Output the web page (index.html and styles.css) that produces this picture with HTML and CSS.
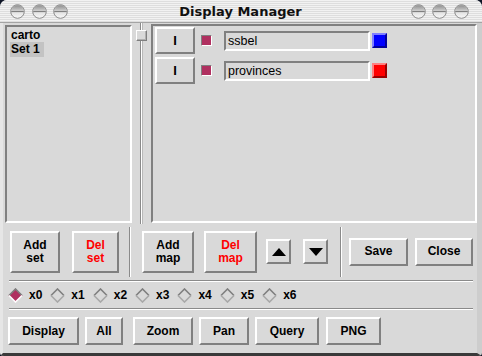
FILE: index.html
```html
<!DOCTYPE html>
<html>
<head>
<meta charset="utf-8">
<link rel="stylesheet" href="styles.css">
</head>
<body>
<svg class="defs" width="0" height="0" aria-hidden="true">
  <defs>
    <linearGradient id="knobTop" x1="0" y1="0" x2="0" y2="1">
      <stop offset="0" stop-color="#8e8e8e"/>
      <stop offset="1" stop-color="#d2d2d2"/>
    </linearGradient>
    <linearGradient id="knobBody" x1="0" y1="0" x2="0" y2="1">
      <stop offset="0" stop-color="#c8c8c8"/>
      <stop offset="1" stop-color="#f8f8f8"/>
    </linearGradient>
  </defs>
</svg>
<div class="window">
  <div class="titlebar">
    <div class="knobs">
      <svg class="knob" viewBox="0 0 15 15"><circle cx="7.5" cy="7.5" r="6.8" fill="url(#knobBody)" stroke="#8a8a8a"/><path d="M1.4 7.3 A6.1 6.1 0 0 1 13.6 7.3 Z" fill="url(#knobTop)"/><line x1="1.2" y1="7.6" x2="13.8" y2="7.6" stroke="#777"/></svg>
      <svg class="knob" viewBox="0 0 15 15"><circle cx="7.5" cy="7.5" r="6.8" fill="url(#knobBody)" stroke="#8a8a8a"/><path d="M1.4 7.3 A6.1 6.1 0 0 1 13.6 7.3 Z" fill="url(#knobTop)"/><line x1="1.2" y1="7.6" x2="13.8" y2="7.6" stroke="#777"/></svg>
      <svg class="knob" viewBox="0 0 15 15"><circle cx="7.5" cy="7.5" r="6.8" fill="url(#knobBody)" stroke="#8a8a8a"/><path d="M1.4 7.3 A6.1 6.1 0 0 1 13.6 7.3 Z" fill="url(#knobTop)"/><line x1="1.2" y1="7.6" x2="13.8" y2="7.6" stroke="#777"/></svg>
    </div>
    <div class="title">Display Manager</div>
    <div class="knobs">
      <svg class="knob" viewBox="0 0 15 15"><circle cx="7.5" cy="7.5" r="6.8" fill="url(#knobBody)" stroke="#8a8a8a"/><path d="M1.4 7.3 A6.1 6.1 0 0 1 13.6 7.3 Z" fill="url(#knobTop)"/><line x1="1.2" y1="7.6" x2="13.8" y2="7.6" stroke="#777"/></svg>
      <svg class="knob" viewBox="0 0 15 15"><circle cx="7.5" cy="7.5" r="6.8" fill="url(#knobBody)" stroke="#8a8a8a"/><path d="M1.4 7.3 A6.1 6.1 0 0 1 13.6 7.3 Z" fill="url(#knobTop)"/><line x1="1.2" y1="7.6" x2="13.8" y2="7.6" stroke="#777"/></svg>
      <svg class="knob" viewBox="0 0 15 15"><circle cx="7.5" cy="7.5" r="6.8" fill="url(#knobBody)" stroke="#8a8a8a"/><path d="M1.4 7.3 A6.1 6.1 0 0 1 13.6 7.3 Z" fill="url(#knobTop)"/><line x1="1.2" y1="7.6" x2="13.8" y2="7.6" stroke="#777"/></svg>
    </div>
  </div>

  <div class="body">
    <div class="content">
      <div class="top">
        <div class="listbox">
          <div class="item">carto</div>
          <div class="item"><span class="selected">Set 1</span></div>
        </div>
        <div class="scale">
          <div class="slider"></div>
        </div>
        <div class="maps">
          <div class="maprow">
            <div class="btn btn-i">I</div>
            <div class="check"></div>
            <div class="entry">ssbel</div>
            <div class="swatch swatch-blue"></div>
          </div>
          <div class="maprow">
            <div class="btn btn-i">I</div>
            <div class="check"></div>
            <div class="entry">provinces</div>
            <div class="swatch swatch-red"></div>
          </div>
        </div>
      </div>

      <div class="actions">
        <div class="btn tall w-addset">Add<br>set</div>
        <div class="btn tall red w-delset">Del<br>set</div>
        <div class="vsep"></div>
        <div class="btn tall w-addmap">Add<br>map</div>
        <div class="btn tall red w-delmap">Del<br>map</div>
        <div class="btn arrow w-up"><svg width="14" height="8" viewBox="0 0 14 8"><polygon points="7,0 14,8 0,8" fill="#000"/></svg></div>
        <div class="btn arrow w-down"><svg width="14" height="8" viewBox="0 0 14 8"><polygon points="0,0 14,0 7,8" fill="#000"/></svg></div>
        <div class="vsep vsep2"></div>
        <div class="btn short w-save">Save</div>
        <div class="btn short w-close">Close</div>
      </div>

      <div class="hsep"></div>

      <div class="radios">
        <div class="radio"><svg class="dia" viewBox="0 0 15 15"><polygon points="7.5,0.5 14.5,7.5 7.5,14.5 0.5,7.5" fill="#b03060"/><polyline points="1,7.5 7.5,1 14,7.5" fill="none" stroke="#7f7f7f" stroke-width="1.6"/><polyline points="1,7.5 7.5,14 14,7.5" fill="none" stroke="#ffffff" stroke-width="1.6"/></svg><span>x0</span></div>
        <div class="radio"><svg class="dia" viewBox="0 0 15 15"><polygon points="7.5,0.5 14.5,7.5 7.5,14.5 0.5,7.5" fill="#d9d9d9"/><polyline points="1,7.5 7.5,1 14,7.5" fill="none" stroke="#7f7f7f" stroke-width="1.6"/><polyline points="1,7.5 7.5,14 14,7.5" fill="none" stroke="#a8a8a8" stroke-width="1.6"/></svg><span>x1</span></div>
        <div class="radio"><svg class="dia" viewBox="0 0 15 15"><polygon points="7.5,0.5 14.5,7.5 7.5,14.5 0.5,7.5" fill="#d9d9d9"/><polyline points="1,7.5 7.5,1 14,7.5" fill="none" stroke="#7f7f7f" stroke-width="1.6"/><polyline points="1,7.5 7.5,14 14,7.5" fill="none" stroke="#a8a8a8" stroke-width="1.6"/></svg><span>x2</span></div>
        <div class="radio"><svg class="dia" viewBox="0 0 15 15"><polygon points="7.5,0.5 14.5,7.5 7.5,14.5 0.5,7.5" fill="#d9d9d9"/><polyline points="1,7.5 7.5,1 14,7.5" fill="none" stroke="#7f7f7f" stroke-width="1.6"/><polyline points="1,7.5 7.5,14 14,7.5" fill="none" stroke="#a8a8a8" stroke-width="1.6"/></svg><span>x3</span></div>
        <div class="radio"><svg class="dia" viewBox="0 0 15 15"><polygon points="7.5,0.5 14.5,7.5 7.5,14.5 0.5,7.5" fill="#d9d9d9"/><polyline points="1,7.5 7.5,1 14,7.5" fill="none" stroke="#7f7f7f" stroke-width="1.6"/><polyline points="1,7.5 7.5,14 14,7.5" fill="none" stroke="#a8a8a8" stroke-width="1.6"/></svg><span>x4</span></div>
        <div class="radio"><svg class="dia" viewBox="0 0 15 15"><polygon points="7.5,0.5 14.5,7.5 7.5,14.5 0.5,7.5" fill="#d9d9d9"/><polyline points="1,7.5 7.5,1 14,7.5" fill="none" stroke="#7f7f7f" stroke-width="1.6"/><polyline points="1,7.5 7.5,14 14,7.5" fill="none" stroke="#a8a8a8" stroke-width="1.6"/></svg><span>x5</span></div>
        <div class="radio"><svg class="dia" viewBox="0 0 15 15"><polygon points="7.5,0.5 14.5,7.5 7.5,14.5 0.5,7.5" fill="#d9d9d9"/><polyline points="1,7.5 7.5,1 14,7.5" fill="none" stroke="#7f7f7f" stroke-width="1.6"/><polyline points="1,7.5 7.5,14 14,7.5" fill="none" stroke="#a8a8a8" stroke-width="1.6"/></svg><span>x6</span></div>
      </div>

      <div class="hsep"></div>

      <div class="tools">
        <div class="btn short w-display">Display</div>
        <div class="btn short w-all">All</div>
        <div class="btn short w-zoom">Zoom</div>
        <div class="btn short w-pan">Pan</div>
        <div class="btn short w-query">Query</div>
        <div class="btn short w-png">PNG</div>
      </div>
    </div>
  </div>
</div>
</body>
</html>
```

FILE: styles.css
```css
* { box-sizing: border-box; }

html, body {
  margin: 0;
  padding: 0;
}

body {
  width: 482px;
  height: 356px;
  overflow: hidden;
  background: #0e1526;
  font-family: "Liberation Sans", Arial, sans-serif;
  font-size: 12px;
  color: #000;
}

.defs { position: absolute; width: 0; height: 0; }

.window {
  width: 482px;
  height: 356px;
  display: flex;
  flex-direction: column;
  border-radius: 7px 7px 4px 4px;
  overflow: hidden;
  background: #d9d9d9;
}

/* ---------- title bar ---------- */
.titlebar {
  height: 23px;
  flex: none;
  display: flex;
  align-items: center;
  justify-content: space-between;
  padding: 0 13px 0 10px;
  border-bottom: 1px solid #a4a4a4;
  background: repeating-linear-gradient(to bottom, #f2f2f2 0 1px, #dedede 1px 2px);
}

.knobs {
  display: flex;
  gap: 6.5px;
  padding-top: 1px;
}

.knob {
  width: 15px;
  height: 15px;
  display: block;
}

.title {
  font-family: "DejaVu Sans", sans-serif;
  font-weight: bold;
  font-size: 13px;
  color: #111;
  padding-left: 2px;
}

/* ---------- window body ---------- */
.body {
  flex: 1;
  display: flex;
  border-left: 3px solid #e6e6e6;
  border-right: 5px solid #cdcdcd;
  border-bottom: 3px solid #3a3a3a;
}

.content {
  flex: 1;
  display: flex;
  flex-direction: column;
}

.top {
  height: 200px;
  flex: none;
  display: flex;
  align-items: flex-start;
}

.listbox {
  margin: 2px 0 0 2px;
  width: 127px;
  height: 198px;
  border: 2px solid;
  border-color: #808080 #ffffff #ffffff #808080;
  padding: 1px 0 0 3px;
  font-weight: bold;
}

.item {
  height: 14px;
  line-height: 14px;
  padding-left: 1px;
}

.selected {
  display: inline-block;
  background: #c3c3c3;
  padding: 0 4px 0 1px;
  margin-left: -1px;
  height: 15px;
  line-height: 15px;
}

.scale {
  width: 19px;
  height: 201px;
  padding: 7px 0 0 4px;
  background: linear-gradient(to right,
    transparent 0 8px, #8a8a8a 8px 9px, #ffffff 9px 10px, #b8b8b8 10px 11px, transparent 11px);
}

.slider {
  width: 11px;
  height: 11px;
  background: #d9d9d9;
  border: 1px solid;
  border-color: #ffffff #7f7f7f #7f7f7f #ffffff;
  box-shadow: inset -1px -1px 0 #b0b0b0;
}

.maps {
  margin-top: 1px;
  width: 326px;
  height: 199px;
  border: 2px solid;
  border-color: #808080 #ffffff #ffffff #808080;
  padding: 1px 0 0 2px;
  display: flex;
  flex-direction: column;
  gap: 3px;
}

.maprow {
  display: flex;
  align-items: center;
}

/* ---------- buttons ---------- */
.btn {
  background: #d9d9d9;
  border: 2px solid;
  border-color: #ffffff #808080 #808080 #ffffff;
  font-weight: bold;
  font-size: 12px;
  line-height: 13px;
  text-align: center;
  display: flex;
  align-items: center;
  justify-content: center;
  flex: none;
}

.btn-i {
  width: 40px;
  height: 27px;
  font-size: 13px;
}

.check {
  width: 11px;
  height: 11px;
  margin-left: 6px;
  background: #b03060;
  border: 1px solid;
  border-color: #808080 #ffffff #ffffff #808080;
  box-shadow: 0 0 0 1px #d9d9d9;
}

.entry {
  margin-left: 12px;
  width: 146px;
  height: 20px;
  border: 2px solid;
  border-color: #808080 #ffffff #ffffff #808080;
  padding: 0 0 0 2px;
  font-size: 12.5px;
  line-height: 16px;
  color: #000;
}

.swatch {
  margin-left: 2px;
  width: 15px;
  height: 15px;
  border: 2px solid;
}

.swatch-blue {
  background: #0000ff;
  border-color: #7f7fff #00009a #00009a #7f7fff;
}

.swatch-red {
  background: #ff0000;
  border-color: #ff8080 #9a0000 #9a0000 #ff8080;
}

.red { color: #ff0000; }

/* ---------- action row ---------- */
.actions {
  height: 57px;
  flex: none;
  display: flex;
  align-items: center;
  padding-left: 7px;
}

.tall { height: 42px; }
.short { height: 28px; }
.arrow { height: 25px; width: 25px; }

.w-addset { width: 50px; }
.w-delset { width: 47px; margin-left: 12px; }
.w-addmap { width: 52px; margin-left: 11px; }
.w-delmap { width: 53px; margin-left: 10px; }
.w-up { margin-left: 9px; }
.w-down { margin-left: 12px; }
.w-save { width: 59px; margin-left: 7px; }
.w-close { width: 58px; margin-left: 7px; }

.vsep {
  width: 2px;
  height: 50px;
  margin-left: 10px;
  border-left: 1px solid #8a8a8a;
  border-right: 1px solid #ffffff;
}

.vsep2 { margin-left: 12px; }

.hsep {
  height: 2px;
  flex: none;
  margin: 0 4px 0 6px;
  border-top: 1px solid #8a8a8a;
  border-bottom: 1px solid #ffffff;
}

/* ---------- radio row ---------- */
.radios {
  height: 26px;
  flex: none;
  display: flex;
  align-items: center;
  padding-left: 5px;
  gap: 8px;
  font-weight: bold;
}

.radio {
  display: flex;
  align-items: center;
  gap: 6px;
}

.dia {
  width: 15px;
  height: 15px;
  display: block;
}

/* ---------- tool row ---------- */
.tools {
  display: flex;
  padding: 7px 0 0 5px;
  gap: 6px;
}

.w-display { width: 71px; }
.w-all { width: 38px; }
.w-zoom { width: 60px; margin-left: 4px; }
.w-pan { width: 50px; }
.w-query { width: 64px; }
.w-png { width: 55px; margin-left: 1px; }
```
